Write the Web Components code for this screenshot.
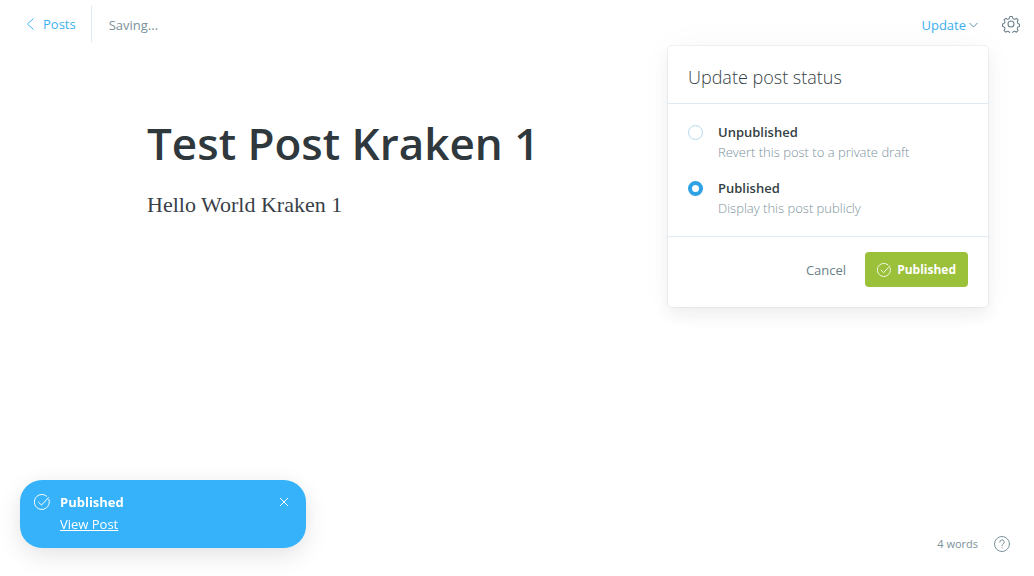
<!DOCTYPE html>
<html lang="en">
<head>
<meta charset="utf-8">
<meta name="viewport" content="width=device-width, initial-scale=1">
<title>Test Post Kraken 1</title>
<style>
  body {
    margin: 0;
    background: #fff;
    color: #394047;
    font-family: "Open Sans", "Noto Sans", sans-serif;
    font-size: 13px;
    line-height: 20px;
    --blue: #3eb0ef;
    --grey: #7c929c;
    --line: #dfebf2;
  }
</style>
</head>
<body>
<editor-page>
  <editor-header slot="header">
    <publish-menu></publish-menu>
  </editor-header>
  <post-editor>
    <span slot="title">Test Post Kraken 1</span>
    <p>Hello World Kraken 1</p>
  </post-editor>
  <status-bar slot="footer">4 words</status-bar>
  <toast-note slot="toast">Published<a slot="action" href="#post">View Post</a></toast-note>
</editor-page>

<script>
  const define = (name, html) => {
    const template = document.createElement('template');
    template.innerHTML = html;
    customElements.define(name, class extends HTMLElement {
      constructor() {
        super();
        this.attachShadow({ mode: 'open' }).append(template.content.cloneNode(true));
      }
    });
  };

  define('check-icon', `
    <style>
      :host { display: block; flex: none; width: 16px; height: 16px; }
      svg { display: block; width: 100%; height: 100%; }
    </style>
    <svg viewBox="0 0 16 16" fill="none" stroke="currentColor" stroke-linecap="round" stroke-linejoin="round" aria-hidden="true">
      <path d="M15 5.6A7.5 7.5 0 1 1 12.6 2.1"/>
      <path d="M4.6 8.2l2.9 2.9 7.1-7.6"/>
    </svg>`);

  define('editor-page', `
    <style>
      :host { display: flex; flex-direction: column; min-height: 100vh; position: relative; }
      main { flex: 1; padding: 64px 24px 80px; }
      .toast { position: fixed; left: 20px; bottom: 28px; }
    </style>
    <slot name="header"></slot>
    <main><slot></slot></main>
    <slot name="footer"></slot>
    <div class="toast"><slot name="toast"></slot></div>`);

  define('editor-header', `
    <style>
      :host { display: block; }
      header { display: flex; align-items: center; justify-content: space-between; height: 48px; padding: 0 14px 0 26px; }
      nav { display: flex; align-items: center; }
      a { display: flex; align-items: center; gap: 8px; height: 36px; padding-right: 15px;
          border-right: 1px solid var(--line); color: var(--blue); text-decoration: none; }
      a svg { width: 9px; height: 12px; }
      .state { margin-left: 17px; padding-top: 2px; color: var(--grey); }
      .actions { display: flex; align-items: center; gap: 24px; }
      button { display: block; padding: 0; border: 0; background: none; color: #6a7f89; cursor: pointer; }
      button svg { display: block; width: 18px; height: 18px; }
    </style>
    <header>
      <nav>
        <a href="#posts">
          <svg viewBox="0 0 9 12" fill="none" stroke="currentColor" aria-hidden="true"><path d="M7.5.5L1.5 6l6 5.5"/></svg>Posts</a>
        <span class="state">Saving...</span>
      </nav>
      <div class="actions">
        <slot></slot>
        <button type="button" aria-label="Settings">
          <svg viewBox="0 0 24 24" fill="none" stroke="currentColor" stroke-width="1.4" stroke-linejoin="round" stroke-linecap="round" aria-hidden="true">
            <circle cx="12" cy="12" r="4"/>
            <path d="M13.7 2.1l.55 1.8a2.4 2.4 0 0 0 3.4 1.45l1.65-.9 2.3 2.35-.9 1.6a2.4 2.4 0 0 0 1.4 3.4l1.2.4v3l-1.4.5a2.4 2.4 0 0 0-1.3 3.4l.9 1.5-2.3 2.3-1.6-.85a2.4 2.4 0 0 0-3.4 1.4l-.5 1.4h-3.2l-.5-1.5a2.4 2.4 0 0 0-3.4-1.4l-1.6.9-2.3-2.3.9-1.6a2.4 2.4 0 0 0-1.4-3.3l-1.6-.5v-3.1l1.6-.5a2.4 2.4 0 0 0 1.4-3.4l-.9-1.6L5 4.4l1.6.9A2.4 2.4 0 0 0 10 3.9l.5-1.8z"/>
          </svg>
        </button>
      </div>
    </header>`);

  define('publish-menu', `
    <style>
      :host { display: block; position: relative; }
      button { font: inherit; cursor: pointer; }
      .trigger { display: flex; align-items: center; gap: 3px; padding: 2px 0 0; border: 0; background: none; color: var(--blue); }
      .trigger svg { width: 9px; height: 6px; color: #5a92b0; }
      .menu { position: absolute; top: 33px; right: -10px; width: 320px; background: #fff; border-radius: 4px;
              box-shadow: 0 0 0 1px rgba(99,114,130,.08), 0 8px 16px rgba(27,39,51,.06), 0 0 36px rgba(27,39,51,.03); }
      h2 { margin: 0; padding: 19px 20px 14px; font-size: 18px; line-height: 24px; font-weight: 300; color: #343f44; }
      fieldset { margin: 0; padding: 18px 20px; border: solid var(--line); border-width: 1px 0; display: grid; gap: 16px; }
      label { display: grid; grid-template-columns: 15px 1fr; column-gap: 15px; align-items: center; }
      input { appearance: none; box-sizing: border-box; width: 15px; height: 15px; margin: 0; border: 1px solid #b3d8ed; border-radius: 50%; background: #fff; }
      input:checked { border: 4px solid #2fa2e6; }
      strong { font-weight: 600; color: #343f44; }
      small { grid-column: 2; font-size: 13px; font-weight: 300; color: var(--grey); }
      footer { display: flex; align-items: center; justify-content: flex-end; gap: 19px; padding: 15px 20px 20px; }
      .cancel { padding: 0; border: 0; background: none; color: #6a7f89; }
      .save { display: flex; align-items: center; gap: 6px; height: 35px; padding: 0 12px; border: 0; border-radius: 4px;
              background: #9bc03a; color: #fff; font-weight: 700; font-size: 12px; }
      .save check-icon { width: 14px; height: 14px; }
    </style>
    <button class="trigger" type="button" aria-expanded="true">Update
      <svg viewBox="0 0 9 6" fill="none" stroke="currentColor" aria-hidden="true"><path d="M.5 1l4 4 4-4"/></svg></button>
    <form class="menu">
      <h2>Update post status</h2>
      <fieldset aria-label="Post status">
        <label><input type="radio" name="status"><strong>Unpublished</strong><small>Revert this post to a private draft</small></label>
        <label><input type="radio" name="status" checked><strong>Published</strong><small>Display this post publicly</small></label>
      </fieldset>
      <footer>
        <button class="cancel" type="button">Cancel</button>
        <button class="save" type="button"><check-icon></check-icon>Published</button>
      </footer>
    </form>`);

  define('post-editor', `
    <style>
      :host { display: block; max-width: 740px; margin: 0 auto; }
      h1 { margin: 0 0 15px; font-size: 44px; line-height: 62px; font-weight: 600; color: #2e383d; }
      ::slotted(p) { margin: 0; font-family: "Liberation Serif", serif; font-size: 22px; line-height: 32px; }
    </style>
    <h1><slot name="title"></slot></h1>
    <slot></slot>`);

  define('status-bar', `
    <style>
      :host { display: flex; align-items: center; justify-content: flex-end; gap: 16px; padding: 0 24px 24px; font-size: 11px; line-height: 16px; color: var(--grey); }
      a { color: inherit; }
      svg { display: block; width: 16px; height: 16px; overflow: visible; }
    </style>
    <slot></slot>
    <a href="#help" aria-label="Help">
      <svg viewBox="0 0 16 16" fill="none" stroke="currentColor" stroke-linecap="round" aria-hidden="true">
        <circle cx="8" cy="8" r="7.5"/>
        <path d="M5.8 6.1a2.2 2.2 0 1 1 3.3 1.9c-.8.4-1.1.8-1.1 1.7"/>
        <path d="M8 11.7v.2"/>
      </svg>
    </a>`);

  define('toast-note', `
    <style>
      :host { display: flex; align-items: flex-start; box-sizing: border-box; width: 286px; padding: 11px 17px 13px 14px; border-radius: 22px;
              background: #35b2f9; color: #fff; line-height: 22px; box-shadow: 0 8px 24px rgba(0,0,0,.1), 0 0 24px rgba(0,0,0,.03); }
      check-icon { margin: 3px 10px 0 0; }
      .text { flex: 1; font-weight: 700; }
      .action { display: block; font-weight: 400; }
      ::slotted(a) { color: inherit; }
      button { padding: 6px 0; border: 0; background: none; color: inherit; cursor: pointer; }
      button svg { display: block; width: 10px; height: 10px; }
    </style>
    <check-icon></check-icon>
    <div class="text"><slot></slot><span class="action"><slot name="action"></slot></span></div>
    <button type="button" aria-label="Close">
      <svg viewBox="0 0 10 10" fill="none" stroke="currentColor" aria-hidden="true"><path d="M1 1l8 8M9 1L1 9"/></svg>
    </button>`);
</script>
</body>
</html>
